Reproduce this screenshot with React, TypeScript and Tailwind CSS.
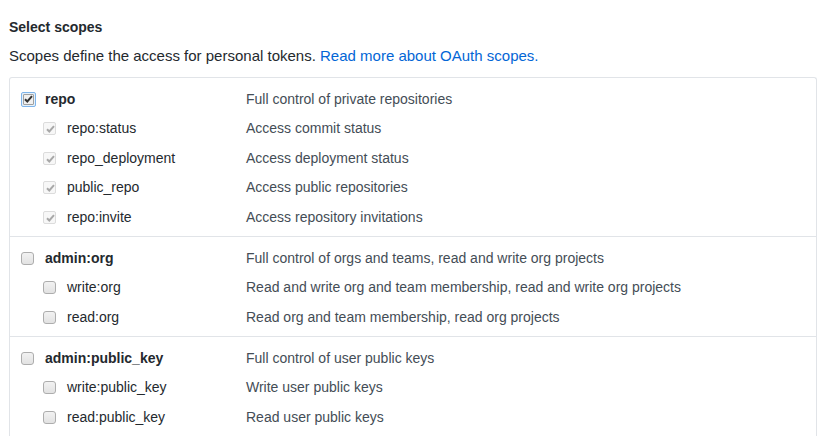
import React from 'react';

type Scope = { name: string; desc: string };
type Group = { parent: Scope; checked: boolean; children: Scope[] };

const groups: Group[] = [
  {
    parent: { name: 'repo', desc: 'Full control of private repositories' },
    checked: true,
    children: [
      { name: 'repo:status', desc: 'Access commit status' },
      { name: 'repo_deployment', desc: 'Access deployment status' },
      { name: 'public_repo', desc: 'Access public repositories' },
      { name: 'repo:invite', desc: 'Access repository invitations' },
    ],
  },
  {
    parent: { name: 'admin:org', desc: 'Full control of orgs and teams, read and write org projects' },
    checked: false,
    children: [
      { name: 'write:org', desc: 'Read and write org and team membership, read and write org projects' },
      { name: 'read:org', desc: 'Read org and team membership, read org projects' },
    ],
  },
  {
    parent: { name: 'admin:public_key', desc: 'Full control of user public keys' },
    checked: false,
    children: [
      { name: 'write:public_key', desc: 'Write user public keys' },
      { name: 'read:public_key', desc: 'Read user public keys' },
    ],
  },
];

function Check({ color }: { color: string }) {
  return (
    <svg width="9" height="8" viewBox="0 0 9 8" className="absolute left-[2px] top-[2px]">
      <path d="M1 4.2 L3.3 6.5 L8 1.2" fill="none" stroke={color} strokeWidth="2" />
    </svg>
  );
}

function Box({ state }: { state: 'focus' | 'disabled' | 'off' }) {
  if (state === 'focus') {
    return (
      <span className="relative inline-block w-[15px] h-[15px] rounded-[2px] border border-[#7eb4ea] bg-[#e5f1fb] shrink-0">
        <span className="absolute inset-[1px] rounded-[1px] border border-[#a0a0a0] bg-[#f0f0f0]" />
        <Check color="#333" />
      </span>
    );
  }
  if (state === 'disabled') {
    return (
      <span className="relative inline-block w-[13px] h-[13px] rounded-[2px] border border-[#dcdcdc] bg-[#f7f7f7] shrink-0">
        <Check color="#a8a8a8" />
      </span>
    );
  }
  return (
    <span className="inline-block w-[13px] h-[13px] rounded-[3px] border border-[#adadad] bg-gradient-to-b from-[#f2f2f2] to-[#e2e2e2] shrink-0" />
  );
}

export default function App() {
  return (
    <div className="w-[819px] h-[447px] overflow-hidden bg-white text-[14px] text-[#24292e] pl-[9px] pr-[2px]" style={{ fontFamily: '"Liberation Sans", Arial, sans-serif' }}>
      <div className="pt-[17px] font-bold leading-[20px]">Select scopes</div>
      <p className="mt-[9px] leading-[20px] text-[15px]">
        Scopes define the access for personal tokens.{' '}
        <a className="text-[#0366d6]">Read more about OAuth scopes.</a>
      </p>
      {/* the shot is cut off before the box ends, so no bottom border */}
      <div className="mt-[11px] border border-b-0 border-[#e1e4e8] rounded-t-[3px]">
        {groups.map((g, gi) => (
          <div key={g.parent.name} className={`pt-[6.5px] pb-[4px] ${gi > 0 ? 'border-t border-[#e1e4e8]' : ''}`}>
            <div className="flex items-center h-[29.5px]">
              <div className="w-[236px] flex items-center pl-[11px]">
                <span className="w-[24px] flex items-center">
                  <Box state={g.checked ? 'focus' : 'off'} />
                </span>
                <span className="font-bold">{g.parent.name}</span>
              </div>
              <span className="text-[#444d56]">{g.parent.desc}</span>
            </div>
            {g.children.map((c) => (
              <div key={c.name} className="flex items-center h-[29.5px]">
                <div className="w-[236px] flex items-center pl-[33px]">
                  <span className="w-[24px] flex items-center">
                    <Box state={g.checked ? 'disabled' : 'off'} />
                  </span>
                  <span>{c.name}</span>
                </div>
                <span className="text-[#444d56]">{c.desc}</span>
              </div>
            ))}
          </div>
        ))}
      </div>
    </div>
  );
}
